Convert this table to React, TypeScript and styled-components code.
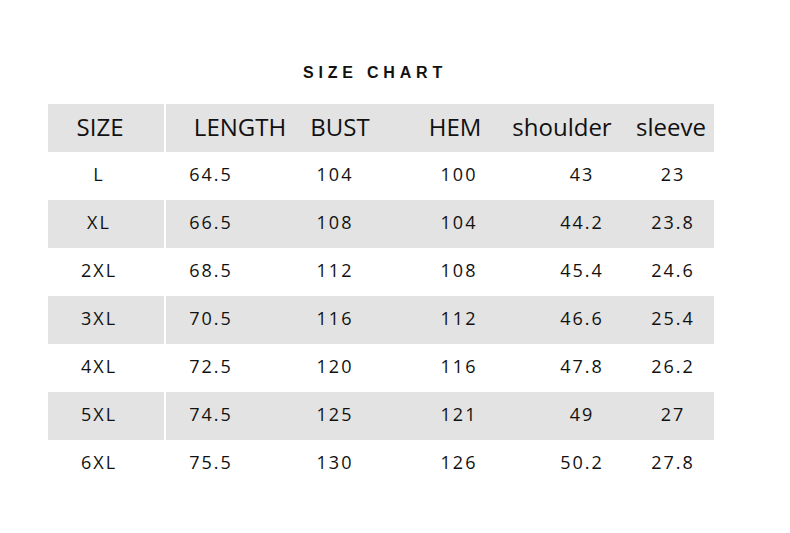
import React from 'react';
import styled, { createGlobalStyle } from 'styled-components';

const GlobalStyle = createGlobalStyle`
  html, body {
    margin: 0;
    padding: 0;
    background: #fff;
  }
  body {
    font-family: 'Open Sans', 'Liberation Sans', sans-serif;
  }
`;

const Page = styled.div`
  width: 790px;
  height: 533px;
  background: #fff;
  padding-top: 63px;
  box-sizing: border-box;
`;

const Title = styled.h1`
  margin: 0 0 21px 0;
  width: 750px;
  text-align: center;
  font-family: 'Liberation Sans', Arial, sans-serif;
  font-weight: bold;
  font-size: 16px;
  line-height: 20px;
  letter-spacing: 4.8px;
  color: #111;
`;

const Table = styled.div`
  margin-left: 48px;
  width: 666px;
  display: flex;
  flex-direction: column;
`;

const Row = styled.div<{ $shaded?: boolean }>`
  display: grid;
  grid-template-columns: 118px 106px 124px 124px 106px 88px;
  height: 48px;
  background: ${({ $shaded }) => ($shaded ? '#e3e3e3' : '#fff')};
`;

const Cell = styled.div<{ $shift: number; $first?: boolean }>`
  display: flex;
  align-items: center;
  justify-content: center;
  white-space: nowrap;
  box-sizing: border-box;
  padding-left: ${({ $shift }) => Math.max(0, $shift * 2)}px;
  padding-right: ${({ $shift }) => Math.max(0, -$shift * 2)}px;
  border-right: ${({ $first }) => ($first ? '2px solid #fff' : 'none')};
`;

const HeadText = styled.span`
  font-size: 24px;
  line-height: 1;
  color: #111;
  margin-bottom: 2px;
`;

const DataText = styled.span`
  font-size: 18px;
  line-height: 1;
  letter-spacing: 2px;
  color: #111;
  margin-right: -2px;
  margin-bottom: 4px;
`;

const columns = [
  { label: 'SIZE', head: -6, data: -8 },
  { label: 'LENGTH', head: 21, data: -9 },
  { label: 'BUST', head: 6, data: 0 },
  { label: 'HEM', head: -3, data: 0 },
  { label: 'shoulder', head: -11, data: 8 },
  { label: 'sleeve', head: 1, data: 2 },
];

const rows = [
  ['L', '64.5', '104', '100', '43', '23'],
  ['XL', '66.5', '108', '104', '44.2', '23.8'],
  ['2XL', '68.5', '112', '108', '45.4', '24.6'],
  ['3XL', '70.5', '116', '112', '46.6', '25.4'],
  ['4XL', '72.5', '120', '116', '47.8', '26.2'],
  ['5XL', '74.5', '125', '121', '49', '27'],
  ['6XL', '75.5', '130', '126', '50.2', '27.8'],
];

const App: React.FC = () => {
  return (
    <Page>
      <GlobalStyle />
      <Title>SIZE CHART</Title>
      <Table>
        <Row $shaded>
          {columns.map((c, i) => (
            <Cell key={c.label} $shift={c.head} $first={i === 0}>
              <HeadText>{c.label}</HeadText>
            </Cell>
          ))}
        </Row>
        {rows.map((r, ri) => (
          <Row key={r[0]} $shaded={ri % 2 === 1}>
            {r.map((v, i) => (
              <Cell key={i} $shift={columns[i].data} $first={i === 0}>
                <DataText>{v}</DataText>
              </Cell>
            ))}
          </Row>
        ))}
      </Table>
    </Page>
  );
};

export default App;
